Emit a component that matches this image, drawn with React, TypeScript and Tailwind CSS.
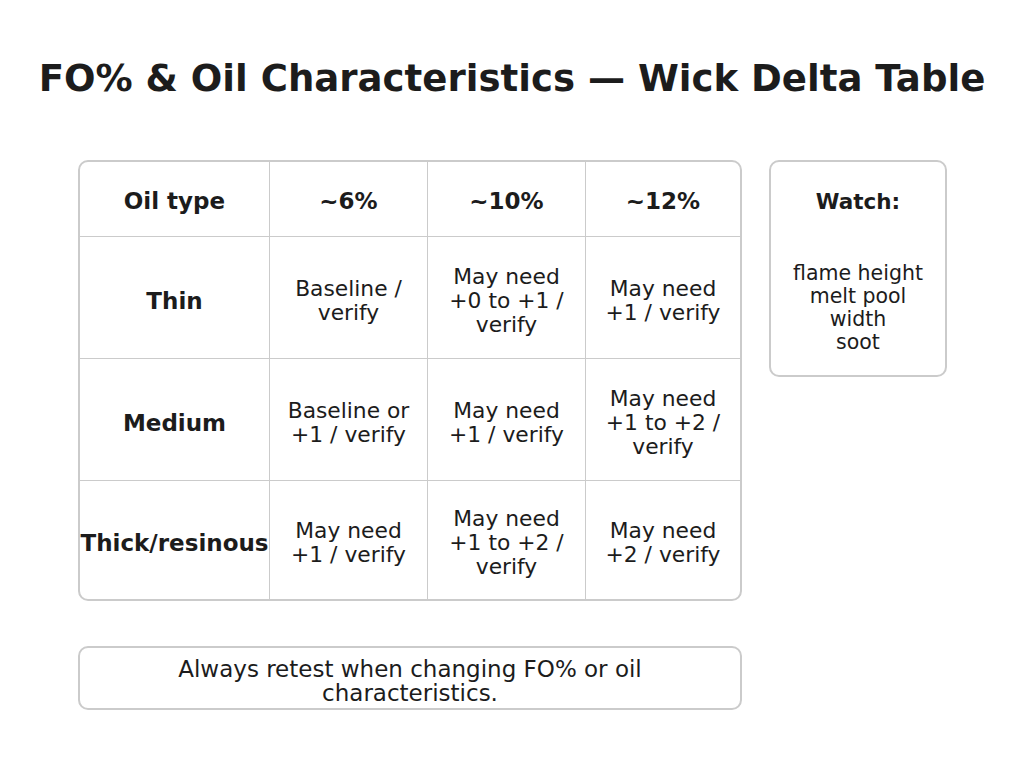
const font = { fontFamily: '"DejaVu Sans", "Liberation Sans", sans-serif' }

const header = ["Oil type", "~6%", "~10%", "~12%"]

const rows = [
  ["Thin", "Baseline / verify", "May need +0 to +1 / verify", "May need +1 / verify"],
  ["Medium", "Baseline or +1 / verify", "May need +1 / verify", "May need +1 to +2 / verify"],
  ["Thick/resinous", "May need +1 / verify", "May need +1 to +2 / verify", "May need +2 / verify"],
]

export default function App() {
  return (
    <div className="w-[1024px] h-[768px] bg-white text-[#1c1c1c] flex flex-col" style={font}>
      <h1 className="h-[160px] pb-[2px] flex items-center justify-center text-[37.1px] font-bold">
        FO% &amp; Oil Characteristics — Wick Delta Table
      </h1>

      <div className="flex items-start gap-[27px] pl-[78px]">
        <div className="w-[664px] h-[441px] rounded-[10px] border-2 border-[#cbcbcb] overflow-hidden grid grid-cols-[190px_158px_158px_1fr] grid-rows-[75px_122px_122px_1fr]">
          {header.map((h, i) => (
            <div
              key={h}
              className={`flex items-center justify-center pt-[4px] text-[23px] font-bold border-b border-[#cbcbcb] ${i < 3 ? "border-r" : ""}`}
            >
              {h}
            </div>
          ))}
          {rows.map((r, ri) =>
            r.map((c, ci) => (
              <div
                key={ri + "-" + ci}
                className={`flex items-center justify-center text-center pt-[6px] leading-[24px] border-[#cbcbcb] ${
                  ci < 3 ? "border-r" : ""
                } ${ri < 2 ? "border-b" : ""} ${ci === 0 ? "font-bold text-[23px] px-0" : "text-[21.8px] px-[14px]"}`}
              >
                {c}
              </div>
            ))
          )}
        </div>

        <div className="w-[178px] h-[217px] rounded-[10px] border-2 border-[#cbcbcb] flex flex-col items-center px-4">
          <div className="mt-[24px] text-[21.5px] leading-[32px] font-bold">Watch:</div>
          <div className="mt-[44px] text-center text-[20.5px] leading-[23px]">
            flame height
            <br />
            melt pool
            <br />
            width
            <br />
            soot
          </div>
        </div>
      </div>

      <div className="ml-[78px] mt-[45px] w-[664px] h-[64px] rounded-[10px] border-2 border-[#cbcbcb] flex items-center justify-center px-6 pt-[6px] text-center text-[23px] leading-[24px]">
        Always retest when changing FO% or oil characteristics.
      </div>
    </div>
  )
}
